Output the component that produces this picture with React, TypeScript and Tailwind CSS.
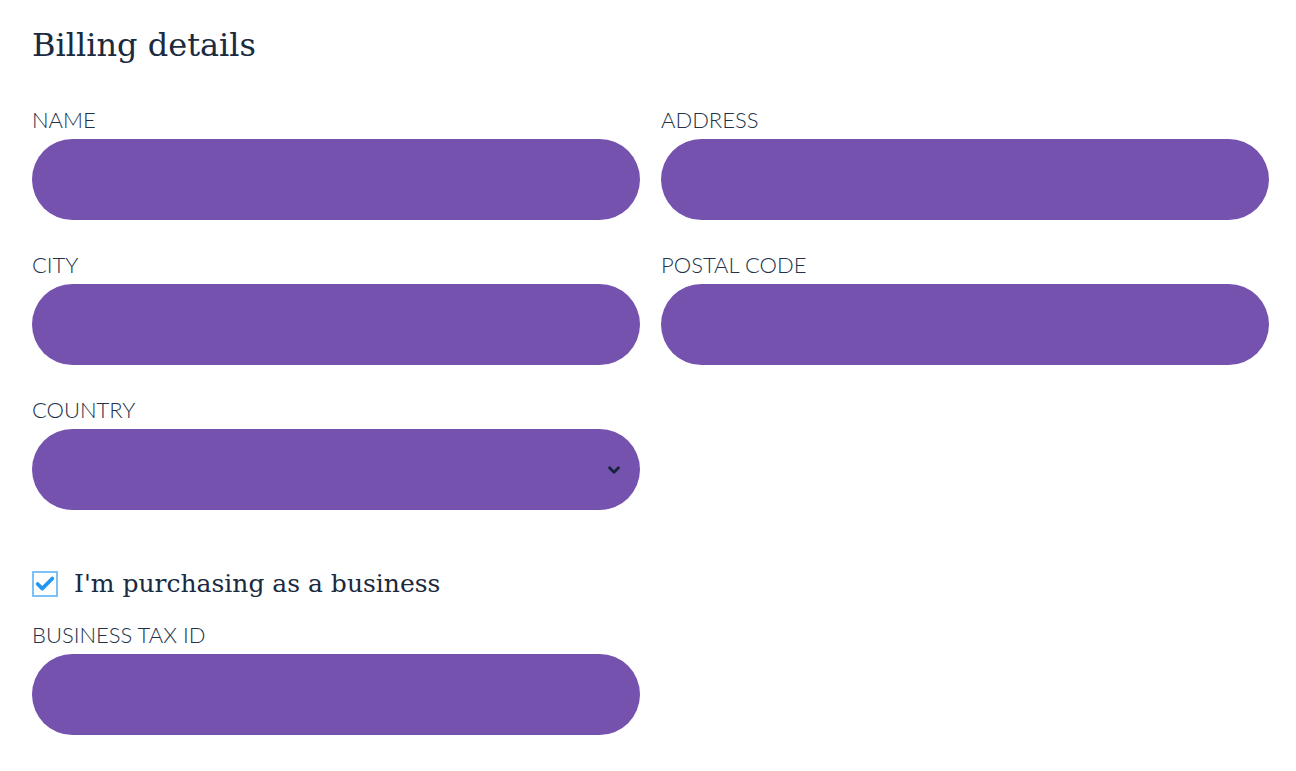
import { Check, ChevronDown } from "lucide-react";

const label = "block text-[22px] leading-[24px] uppercase font-light text-[#22324a] font-['Lato','Open_Sans',sans-serif]";
const field = "block w-full h-[81px] rounded-full bg-[#7452ae] outline-none px-8 text-white";

function Field({ name }: { name: string }) {
  return (
    <div>
      <label className={label}>{name}</label>
      <input className={`${field} mt-[7px]`} />
    </div>
  );
}

export default function App() {
  return (
    <div className="bg-white min-h-[771px] pl-8 pr-[27px] pt-[20px] text-[#1a2a40]">
      <h2 className="text-[32px] leading-[50px] font-['DejaVu_Serif',serif]">Billing details</h2>

      <div className="grid grid-cols-2 gap-x-[21px] gap-y-[33px] mt-[38px]">
        <Field name="Name" />
        <Field name="Address" />
        <Field name="City" />
        <Field name="Postal code" />
        <div>
          <label className={label}>Country</label>
          <div className="relative mt-[7px]">
            <select className={`${field} appearance-none`}></select>
            <ChevronDown
              size={18}
              strokeWidth={3.5}
              className="absolute right-[17px] top-1/2 -translate-y-1/2 text-[#14233a] pointer-events-none"
            />
          </div>
        </div>
      </div>

      <label className="flex items-center gap-4 mt-[58px]">
        <span className="w-[26px] h-[26px] border-2 border-[#7cc0f5] flex items-center justify-center">
          <Check size={22} strokeWidth={4} className="text-[#2196f3]" />
        </span>
        <span className="text-[25px] leading-[32px] font-['DejaVu_Serif',serif]">I'm purchasing as a business</span>
      </label>

      <div className="w-[608px] mt-[23px]">
        <Field name="Business tax ID" />
      </div>
    </div>
  );
}
